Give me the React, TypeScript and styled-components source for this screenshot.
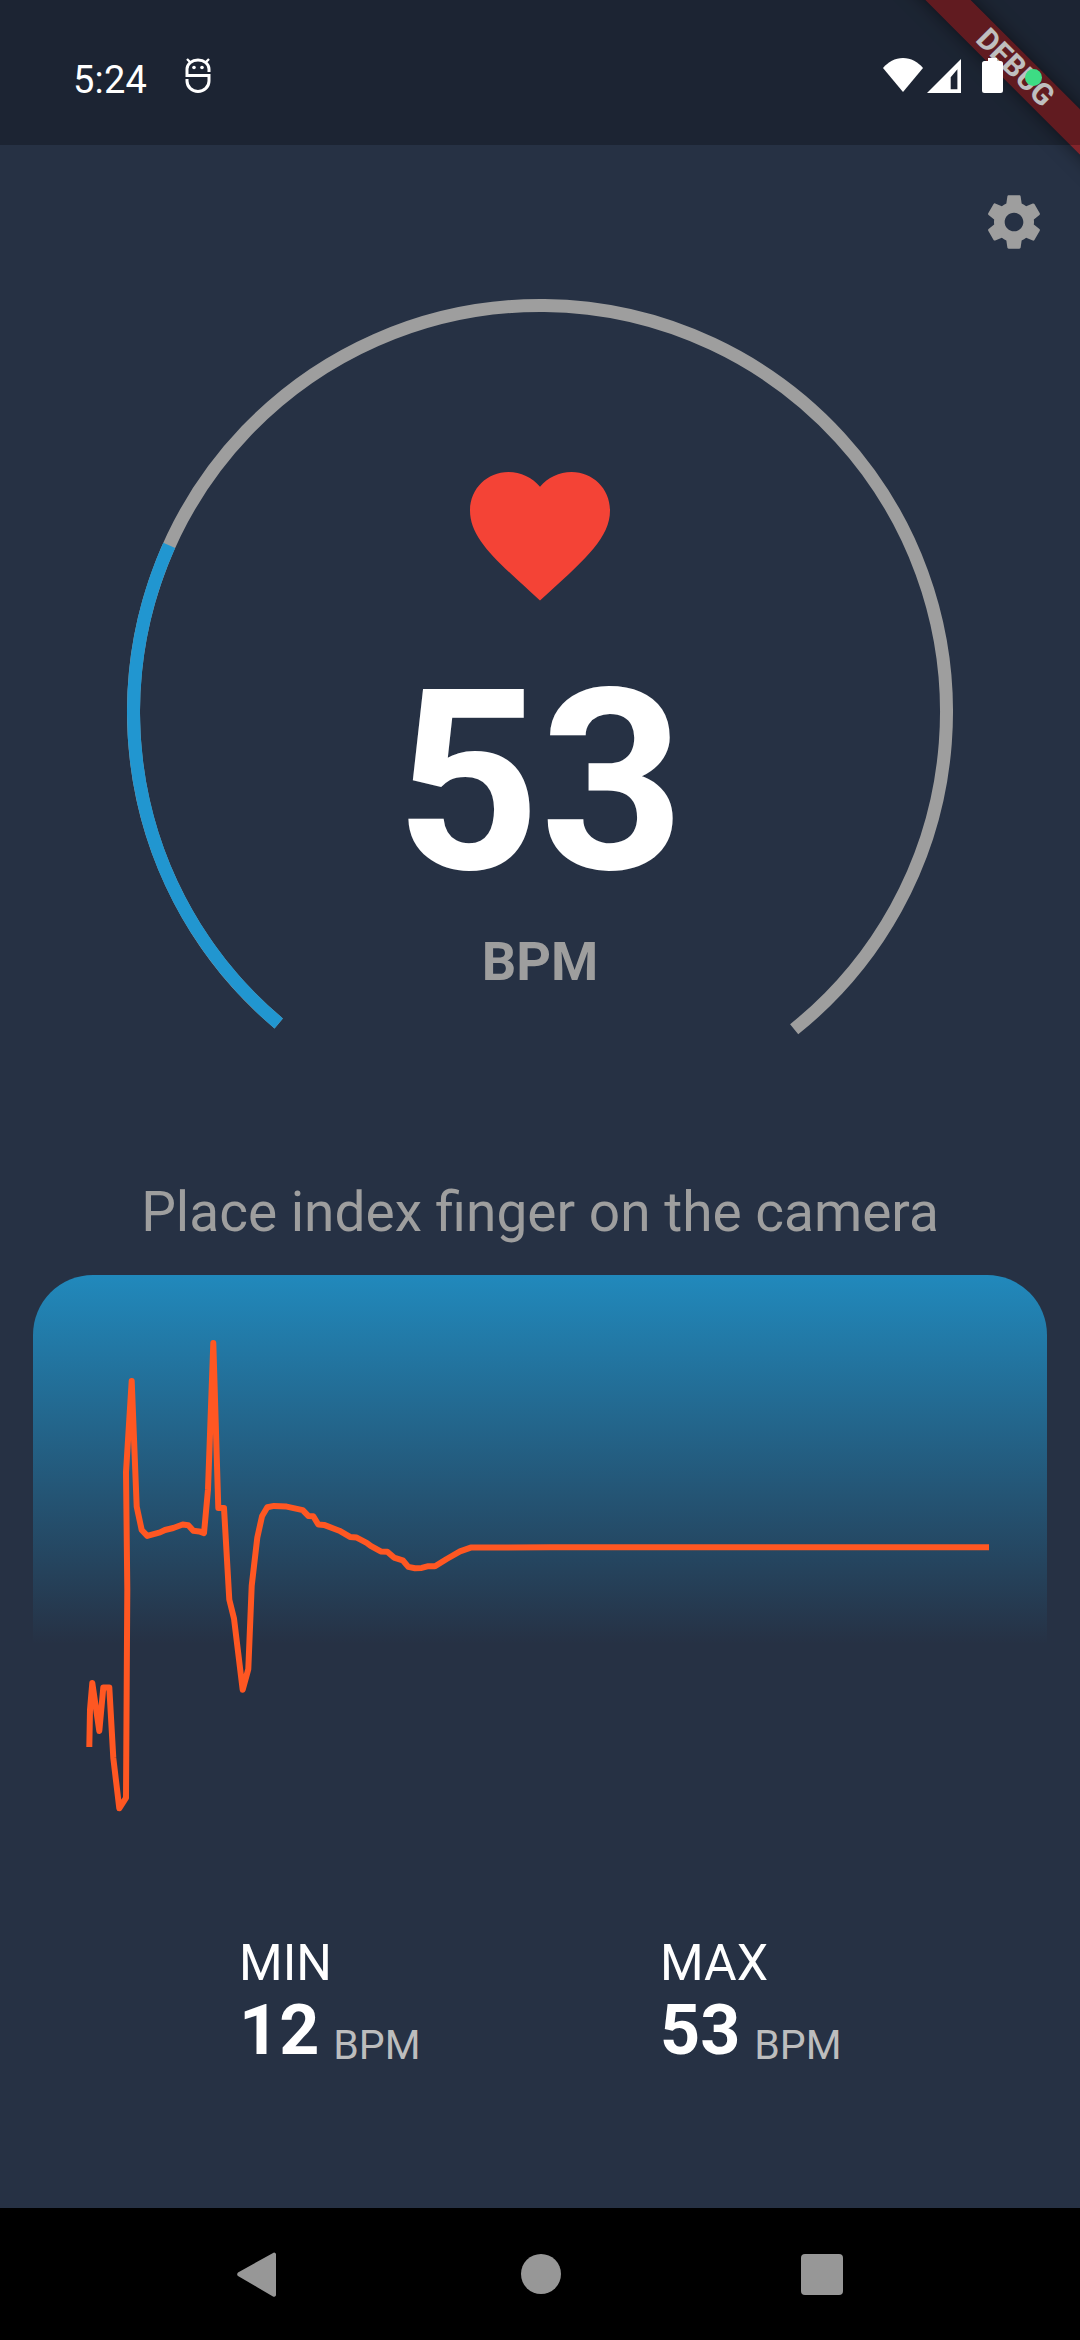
import React from "react";
import styled, { createGlobalStyle } from "styled-components";

const GlobalStyle = createGlobalStyle`
  html, body { margin: 0; padding: 0; background: #263144; }
  * { box-sizing: border-box; }
`;

const Page = styled.div`
  position: relative;
  width: 1080px;
  height: 2340px;
  display: flex;
  flex-direction: column;
  overflow: hidden;
  background: #263144;
  font-family: Roboto, "Liberation Sans", sans-serif;
`;

const StatusBar = styled.div`
  position: relative;
  z-index: 2;
  flex: 0 0 145px;
  display: flex;
  align-items: flex-start;
  padding: 58px 0 0 73px;
  background: rgba(0, 0, 0, 0.25);
  color: #fff;
`;

const Clock = styled.span`
  font-size: 38px;
  line-height: 44px;
  letter-spacing: 0.2px;
`;

const DebugGlyph = styled.svg`
  display: block;
  margin: 0 0 0 38px;
  width: 26px;
  height: 35px;
`;

const StatusIcons = styled.div`
  display: flex;
  align-items: flex-start;
  margin-left: auto;
  margin-right: 77px;
`;

const WifiGlyph = styled.svg`
  display: block;
  width: 40px;
  height: 34px;
`;

const SignalGlyph = styled.svg`
  display: block;
  width: 34px;
  height: 34px;
  margin: 1px 0 0 4px;
`;

const BatteryGlyph = styled.svg`
  display: block;
  width: 21px;
  height: 35px;
  margin-left: 21px;
`;

const Banner = styled.div`
  position: absolute;
  z-index: 1;
  top: 50px;
  left: 834px;
  width: 360px;
  height: 32px;
  padding-left: 4px;
  transform: rotate(45deg);
  display: flex;
  align-items: center;
  justify-content: center;
  background: rgba(183, 28, 28, 0.63);
  box-shadow: 0 0 18px rgba(0, 0, 0, 0.5);
  color: #fff;
  font-size: 30px;
  font-weight: 700;
  line-height: 32px;
`;

const CameraDot = styled.span`
  position: absolute;
  z-index: 3;
  top: 69px;
  left: 1025px;
  width: 17px;
  height: 17px;
  border-radius: 50%;
  background: #3ddc84;
`;

const Main = styled.main`
  flex: 1;
  display: flex;
  flex-direction: column;
  min-height: 0;
`;

const TopActions = styled.div`
  flex: 0 0 109px;
  display: flex;
  justify-content: flex-end;
  padding: 45px 34px 0 0;
`;

const GearGlyph = styled.svg`
  display: block;
  width: 64px;
  height: 64px;
  fill: #9e9e9e;
`;

const Gauge = styled.section`
  flex: 0 0 927px;
  display: grid;
  justify-items: center;
  align-items: start;
`;

const GaugeRing = styled.svg`
  grid-area: 1 / 1;
  display: block;
  width: 1080px;
  height: 820px;
`;

const GaugeCenter = styled.div`
  grid-area: 1 / 1;
  display: flex;
  flex-direction: column;
  align-items: center;
  padding-top: 197px;
`;

const HeartGlyph = styled.svg`
  display: block;
  width: 168px;
  height: 168px;
  fill: #f44336;
`;

const Reading = styled.div`
  margin-top: 38px;
  color: #fff;
  font-size: 252px;
  font-weight: 700;
  line-height: 252px;
`;

const ReadingUnit = styled.div`
  margin-top: 21px;
  color: #9e9e9e;
  font-size: 54px;
  font-weight: 700;
  line-height: 64px;
`;

const Prompt = styled.p`
  margin: 0;
  flex: 0 0 94px;
  color: #9e9e9e;
  font-size: 55px;
  line-height: 62px;
  text-align: center;
`;

const ChartCard = styled.section`
  flex: 0 0 661px;
  margin: 0 33px;
  border-radius: 60px 60px 0 0;
  background: linear-gradient(180deg, #2189bc 0%, #263144 55.8%);
`;

const ChartDrawing = styled.svg`
  display: block;
  width: 1014px;
  height: 625px;
`;

const Stats = styled.div`
  display: flex;
  padding: 0 0 0 239px;
`;

const Stat = styled.div`
  flex: 0 0 421px;
  display: flex;
  flex-direction: column;
`;

const StatLabel = styled.span`
  color: #fff;
  font-size: 50px;
  line-height: 54px;
`;

const StatValueRow = styled.div`
  display: flex;
  align-items: flex-end;
  gap: 14px;
`;

const StatValue = styled.span`
  color: #fff;
  font-size: 70px;
  font-weight: 700;
  line-height: 80px;
`;

const StatUnit = styled.span`
  color: #bdbdbd;
  font-size: 41px;
  line-height: 50px;
`;

const NavBar = styled.nav`
  flex: 0 0 132px;
  display: flex;
  align-items: center;
  background: #000;
  padding: 0 0 0 237px;
`;

const NavGlyph = styled.svg<{ $gap: number }>`
  display: block;
  flex: none;
  margin-right: ${(p) => p.$gap}px;
  fill: #979797;
`;

const CX = 540;
const CY = 712;
const R = 406.5;

const polar = (deg: number) => {
  const a = (deg * Math.PI) / 180;
  return [CX + R * Math.cos(a), CY + R * Math.sin(a)];
};

const arc = (from: number, to: number) => {
  const [x1, y1] = polar(from);
  const [x2, y2] = polar(to);
  return `M${x1} ${y1}A${R} ${R} 0 ${to - from > 180 ? 1 : 0} 1 ${x2} ${y2}`;
};

const TRACE: [number, number][] = [
  [118, 1298], [120, 1190], [127, 1112], [148, 1252], [160, 1125], [178, 1125], [190, 1330], [208, 1476],
  [228, 1446], [232, 840], [228, 500], [245, 235], [260, 600], [275, 668], [292, 685], [330, 675],
  [345, 668], [370, 662], [398, 652], [415, 654], [430, 670], [448, 672], [462, 677], [474, 550],
  [490, 125], [505, 604], [522, 604], [538, 870], [552, 925], [578, 1132], [595, 1072], [605, 830],
  [622, 690], [636, 628], [652, 602], [672, 598], [710, 600], [758, 610], [775, 627], [790, 628],
  [805, 652], [822, 653], [868, 670], [900, 688], [920, 690], [950, 705], [962, 714], [992, 730],
  [1012, 731], [1032, 748], [1058, 756], [1075, 775], [1095, 779], [1115, 778], [1135, 773], [1155, 773],
  [1190, 752], [1230, 730], [1262, 719], [1500, 718], [2817, 718],
];

const tracePoints = TRACE.map(([x, y]) => `${(50 + x / 3).toFixed(1)},${(1300 + y / 2.904).toFixed(1)}`).join(" ");

export default function App() {
  return (
    <Page>
      <GlobalStyle />
      <StatusBar>
        <Clock>5:24</Clock>
        <DebugGlyph viewBox="0 0 26 35" fill="none" stroke="#fff" strokeWidth="3">
          <path d="M24 14v-3a11 9 0 0 0-22 0v6.500h22V23a11 10.500 0 0 1-22 0v-2" />
          <path d="M2 1l3 3M24 1l-3 3" strokeWidth="2.4" />
          <circle cx="9" cy="9.500" r="1.800" fill="#fff" stroke="none" />
          <circle cx="17" cy="9.500" r="1.800" fill="#fff" stroke="none" />
        </DebugGlyph>
        <StatusIcons>
          <WifiGlyph viewBox="0 0 40 34">
            <path d="M20 34L0 10C5 4 12 0 20 0s15 4 20 10z" fill="#fff" />
          </WifiGlyph>
          <SignalGlyph viewBox="0 0 34 34">
            <path fillRule="evenodd" d="M0 34L34 0v34zM23.700 18.300L30.400 10.300V30.300H23.700z" fill="#fff" />
          </SignalGlyph>
          <BatteryGlyph viewBox="0 0 21 35">
            <path d="M6 0h9v3h3.500a2.500 2.500 0 0 1 2.500 2.500V32.500a2.500 2.500 0 0 1-2.500 2.500h-16A2.500 2.500 0 0 1 0 32.500V5.500A2.500 2.500 0 0 1 2.500 3H6z" fill="#fff" />
          </BatteryGlyph>
        </StatusIcons>
      </StatusBar>
      <Banner>DEBUG</Banner>
      <CameraDot />
      <Main>
        <TopActions>
          <GearGlyph viewBox="0 0 24 24">
            <path d="M19.43 12.98c.04-.32.07-.64.07-.98s-.03-.66-.07-.98l2.11-1.65c.19-.15.24-.42.12-.64l-2-3.46c-.12-.22-.39-.3-.61-.22l-2.49 1c-.52-.4-1.08-.73-1.69-.98l-.38-2.65C14.46 2.18 14.25 2 14 2h-4c-.25 0-.46.18-.49.42l-.38 2.65c-.61.25-1.17.59-1.69.98l-2.49-1c-.23-.09-.49 0-.61.22l-2 3.46c-.13.22-.07.49.12.64l2.11 1.65c-.04.32-.07.65-.07.98s.03.66.07.98l-2.11 1.65c-.19.15-.24.42-.12.64l2 3.46c.12.22.39.3.61.22l2.49-1c.52.4 1.08.73 1.69.98l.38 2.65c.03.24.24.42.49.42h4c.25 0 .46-.18.49-.42l.38-2.65c.61-.25 1.17-.59 1.69-.98l2.49 1c.23.09.49 0 .61-.22l2-3.46c.12-.22.07-.49-.12-.64l-2.11-1.65zM12 15.500c-1.93 0-3.500-1.57-3.500-3.500s1.57-3.500 3.500-3.500 3.500 1.57 3.500 3.500-1.57 3.500-3.500 3.500z" />
          </GearGlyph>
        </TopActions>
        <Gauge>
          <GaugeRing viewBox="0 254 1080 820" fill="none" strokeWidth="13">
            <path d={arc(130, 411.3)} stroke="#9e9e9e" />
            <path d={arc(130, 204.2)} stroke="#2196d0" />
          </GaugeRing>
          <GaugeCenter>
            <HeartGlyph viewBox="0 0 24 24">
              <path d="M12 21.350l-1.450-1.320C5.400 15.360 2 12.280 2 8.500 2 5.420 4.420 3 7.500 3c1.740 0 3.410.81 4.500 2.090C13.090 3.810 14.760 3 16.500 3 19.580 3 22 5.420 22 8.500c0 3.780-3.400 6.860-8.550 11.540L12 21.350z" />
            </HeartGlyph>
            <Reading>53</Reading>
            <ReadingUnit>BPM</ReadingUnit>
          </GaugeCenter>
        </Gauge>
        <Prompt>Place index finger on the camera</Prompt>
        <ChartCard>
          <ChartDrawing viewBox="33 1275 1014 625" fill="none">
            <polyline points={tracePoints} stroke="#ff5722" strokeWidth="6" strokeLinejoin="round" />
          </ChartDrawing>
        </ChartCard>
        <Stats>
          <Stat>
            <StatLabel>MIN</StatLabel>
            <StatValueRow>
              <StatValue>12</StatValue>
              <StatUnit>BPM</StatUnit>
            </StatValueRow>
          </Stat>
          <Stat>
            <StatLabel>MAX</StatLabel>
            <StatValueRow>
              <StatValue>53</StatValue>
              <StatUnit>BPM</StatUnit>
            </StatValueRow>
          </Stat>
        </Stats>
      </Main>
      <NavBar>
        <NavGlyph $gap={245} width="39" height="45" viewBox="0 0 39 45">
          <path d="M37 .5a2 2 0 0 1 2 1.500v41a2 2 0 0 1-3 1.500L1 24a2.500 2.500 0 0 1 0-3.500z" />
        </NavGlyph>
        <NavGlyph $gap={240} width="40" height="40" viewBox="0 0 40 40">
          <circle cx="20" cy="20" r="20" />
        </NavGlyph>
        <NavGlyph $gap={0} width="42" height="41" viewBox="0 0 42 41">
          <rect width="42" height="41" rx="4" />
        </NavGlyph>
      </NavBar>
    </Page>
  );
}
